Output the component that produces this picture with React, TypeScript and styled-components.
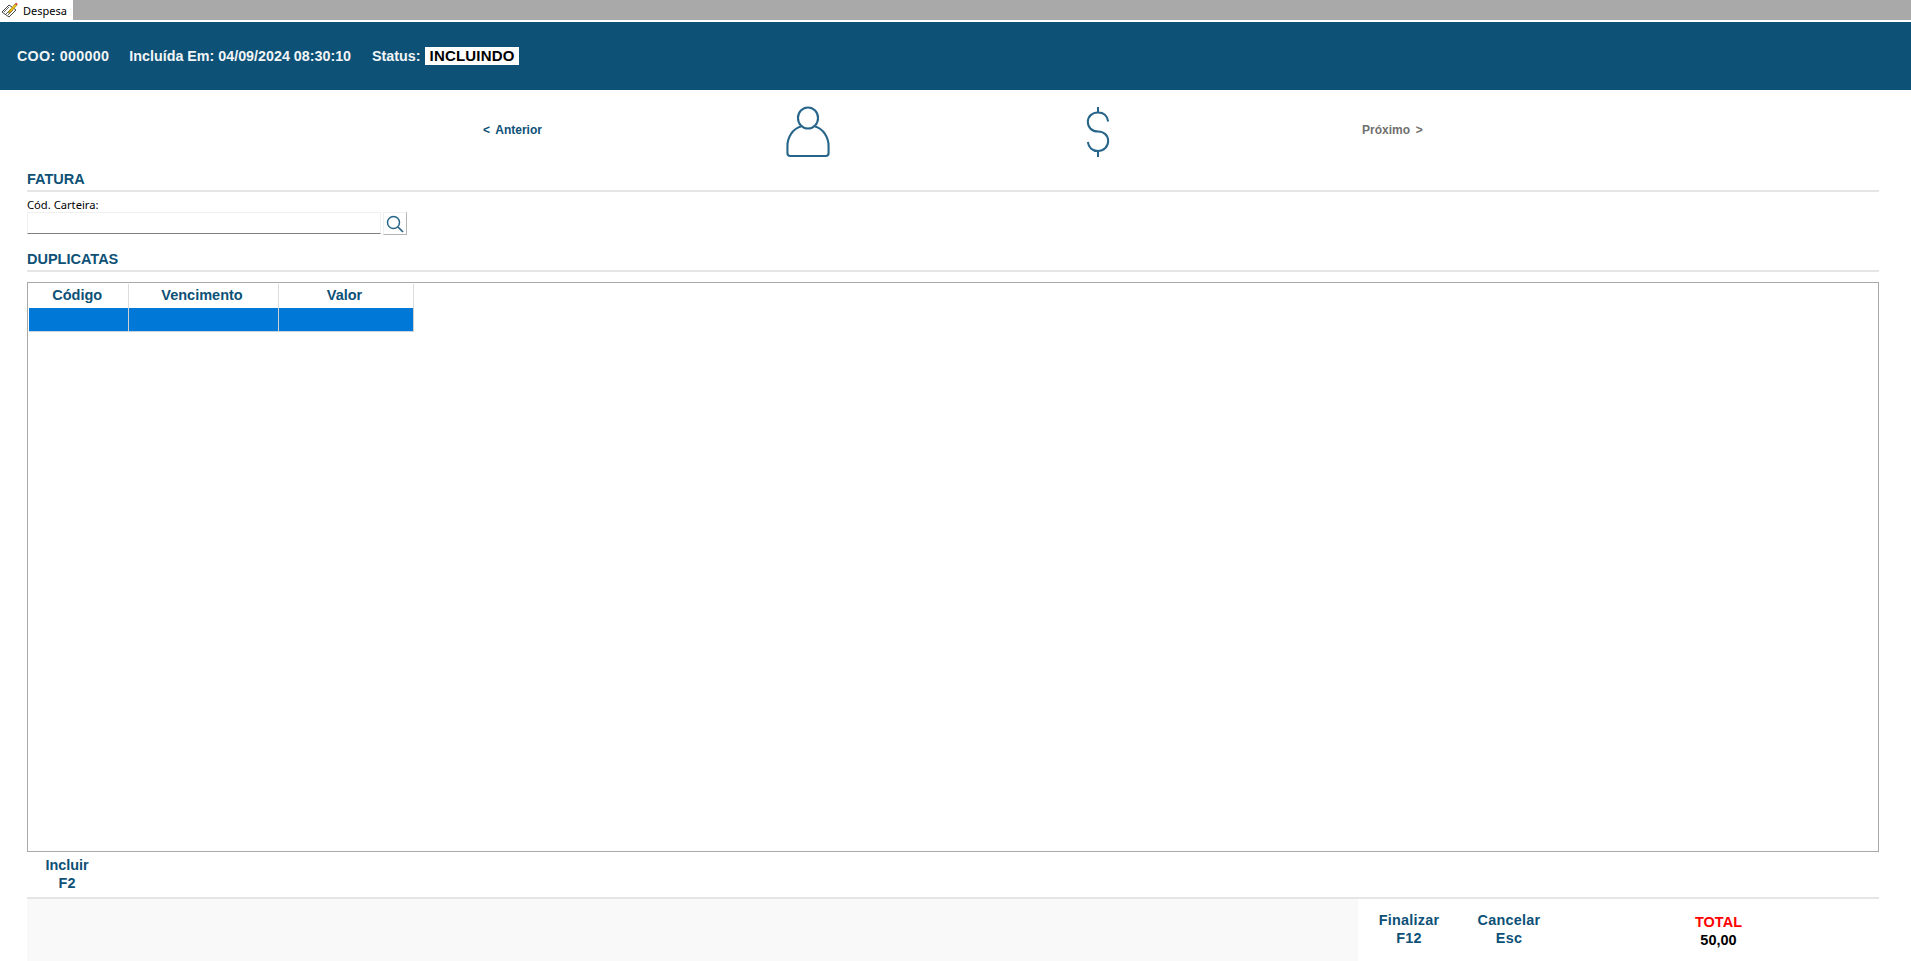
import React from 'react';
import styled, { createGlobalStyle } from 'styled-components';

const GlobalStyle = createGlobalStyle`
  html, body {
    margin: 0;
    padding: 0;
    background: #fff;
    overflow: hidden;
  }
  * {
    box-sizing: border-box;
  }
`;

const Page = styled.div`
  width: 1911px;
  height: 961px;
  display: flex;
  flex-direction: column;
  font-family: 'Liberation Sans', Arial, sans-serif;
  color: #0d5176;
`;

const TabBar = styled.div`
  height: 20px;
  background: #a9a9a9;
  display: flex;
  flex-shrink: 0;
`;

const Tab = styled.div`
  width: 73px;
  height: 20px;
  background: #fff;
  display: flex;
  align-items: center;
  padding-left: 1px;
  gap: 5px;
  font-family: 'Noto Sans', 'Open Sans', sans-serif;
  font-size: 11px;
  color: #000;
`;

const Header = styled.header`
  margin-top: 2px;
  height: 68px;
  background: #0d5176;
  display: flex;
  align-items: center;
  padding-left: 17px;
  color: #f2f5f7;
  font-size: 14.3px;
  font-weight: 700;
  flex-shrink: 0;
`;

const HeaderItem = styled.span<{ $spread?: boolean }>`
  margin-right: 20px;
  white-space: pre;
  letter-spacing: ${({ $spread }) => ($spread ? '0.3px' : '0')};
`;

const StatusLabel = styled.span`
  margin-left: 1px;
  margin-right: 4px;
`;

const StatusBadge = styled.span`
  background: #fff;
  color: #000;
  font-size: 15px;
  line-height: 18px;
  padding: 0 4px 0 5px;
  letter-spacing: 0.2px;
`;

const Steps = styled.nav`
  height: 78px;
  padding-left: 483px;
  display: grid;
  grid-template-columns: 303px 300px 276px auto;
  align-items: center;
  flex-shrink: 0;
`;

const StepLink = styled.span<{ $muted?: boolean }>`
  padding-top: 2px;
  font-size: 12px;
  font-weight: 700;
  white-space: pre;
  word-spacing: -0.5px;
  color: ${({ $muted }) => ($muted ? '#6f6f6f' : '#0d5176')};
`;

const StepIcon = styled.div`
  margin-top: 6px;

  svg {
    display: block;
  }
`;

const Content = styled.main`
  flex: 1;
  display: flex;
  flex-direction: column;
  padding: 0 32px 0 27px;
  min-height: 0;
`;

const SectionTitle = styled.h2`
  margin: 0;
  height: 24px;
  padding-top: 1px;
  font-size: 14.5px;
  line-height: 20px;
  font-weight: 700;
  color: #0d5176;
  border-bottom: 2px solid #e5e5e5;
  flex-shrink: 0;
`;

const FieldLabel = styled.label`
  display: block;
  height: 16px;
  margin-top: 5px;
  margin-bottom: -1px;
  font-family: 'Noto Sans', 'Open Sans', sans-serif;
  font-size: 11.2px;
  line-height: 16px;
  color: #000;
`;

const FieldRow = styled.div`
  display: flex;
  gap: 2px;
  height: 23px;
  margin-bottom: 13px;
  flex-shrink: 0;
`;

const TextField = styled.input`
  width: 354px;
  height: 22px;
  border: 1px solid #efefef;
  border-bottom: 1px solid #808080;
  background: #fff;
  outline: none;
  padding: 0 3px;
`;

const SearchButton = styled.button`
  width: 24px;
  height: 23px;
  padding: 0;
  background: #fff;
  border: 1px solid #f0f0f0;
  border-right-color: #b4b4b4;
  border-bottom-color: #b4b4b4;
  display: flex;
  align-items: center;
  justify-content: center;
`;

const GridFrame = styled.div`
  flex: 1;
  min-height: 0;
  margin-top: 10px;
  border: 1px solid #a9a9a9;
  padding: 1px 0 0 1px;
  background: #fff;
`;

const DataTable = styled.table`
  border-collapse: collapse;
  table-layout: fixed;
  width: 384px;
`;

const HeadCell = styled.th<{ $width: number }>`
  width: ${({ $width }) => $width}px;
  height: 24px;
  padding: 0 2px 2px 0;
  font-size: 14.5px;
  font-weight: 700;
  text-align: center;
  color: #0d5176;
  border-right: 1px solid #dcdcdc;
`;

const SelectedCell = styled.td`
  height: 23px;
  padding: 0;
  background: #0078d7;
  border-right: 1px solid #d0d0d0;
  border-bottom: 1px solid #c8d4de;
`;

const ActionRow = styled.div`
  height: 45px;
  flex-shrink: 0;
  display: flex;
`;

const ActionButton = styled.div<{ $width: number }>`
  width: ${({ $width }) => $width}px;
  text-align: center;
  font-size: 14.4px;
  font-weight: 700;
  line-height: 18px;
  color: #0d5176;
  padding-top: 4px;
`;

const Footer = styled.footer`
  margin-left: 27px;
  margin-right: 32px;
  height: 64px;
  flex-shrink: 0;
  display: flex;
  border-top: 2px solid #e5e5e5;
`;

const FooterSpacer = styled.div`
  width: 1331px;
  background: #f9f9f9;
`;

const FooterActions = styled.div`
  display: flex;
  padding-top: 12px;
`;

const FooterButton = styled(ActionButton)`
  padding-top: 0;
  letter-spacing: 0.25px;
`;

const TotalBlock = styled.div`
  width: 95px;
  margin-left: 113px;
  text-align: center;
  padding-top: 14px;
  font-size: 14.5px;
  font-weight: 700;
  line-height: 18px;
`;

const TotalLabel = styled.div`
  color: #ff0000;
`;

const TotalValue = styled.div`
  color: #000;
`;

const NotepadIcon = () => (
  <svg width="17" height="17" viewBox="0 0 17 17" fill="none">
    <path d="M1 10 L8 3 L15 8 L8 15 Z" fill="#fff" stroke="#444" strokeWidth="1" />
    <path d="M3 10 L8 5 M5 12 L10 7 M7 13 L12 8" stroke="#666" strokeWidth="1" />
    <path d="M8 9 L14 2 L16 3 L10 10 L7.5 11 Z" fill="#f0c419" stroke="#8a6d00" strokeWidth="0.6" />
    <path d="M14 2 L15 0.8 L16.6 2 L16 3 Z" fill="#d8232a" />
  </svg>
);

const PersonIcon = () => (
  <svg width="44" height="52" viewBox="0 0 46 52" preserveAspectRatio="none" fill="none" stroke="#27658a" strokeWidth="2.2">
    <circle cx="23" cy="12" r="10.5" />
    <path d="M15.5 20.5 C7 23 1.5 31 1.5 40 V47 C1.5 49.2 2.6 50 4.5 50 H41.5 C43.4 50 44.5 49.2 44.5 47 V40 C44.5 31 39 23 30.5 20.5" />
  </svg>
);

const DollarIcon = () => (
  <svg width="24" height="52" viewBox="0 0 26 52" preserveAspectRatio="none" fill="none" stroke="#27658a" strokeWidth="2.2">
    <path d="M13 1 V6.5 M13 45 V51" />
    <path d="M24 15.5 C23 9.5 18.5 6.5 13 6.5 C6.5 6.5 2 10.5 2 16 C2 21.5 6.5 25.5 13 25.5 C19.5 25.5 24 29.5 24 35 C24 40.5 19.5 45 13 45 C7 45 2.8 41.5 2 36" />
  </svg>
);

const SearchIcon = () => (
  <svg width="18" height="18" viewBox="0 0 18 18" fill="none" stroke="#27658a">
    <circle cx="7.5" cy="7.5" r="6" strokeWidth="1.5" />
    <path d="M12 12 L17 17" strokeWidth="1.7" />
  </svg>
);

const App: React.FC = () => (
  <>
    <GlobalStyle />
    <Page>
      <TabBar>
        <Tab>
          <NotepadIcon />
          Despesa
        </Tab>
      </TabBar>
      <Header>
        <HeaderItem $spread>COO: 000000</HeaderItem>
        <HeaderItem>Incluída Em: 04/09/2024 08:30:10</HeaderItem>
        <StatusLabel>Status:</StatusLabel>
        <StatusBadge>INCLUINDO</StatusBadge>
      </Header>
      <Steps>
        <StepLink>{'<  Anterior'}</StepLink>
        <StepIcon>
          <PersonIcon />
        </StepIcon>
        <StepIcon>
          <DollarIcon />
        </StepIcon>
        <StepLink $muted>{'Próximo  >'}</StepLink>
      </Steps>
      <Content>
        <SectionTitle>FATURA</SectionTitle>
        <FieldLabel>Cód. Carteira:</FieldLabel>
        <FieldRow>
          <TextField />
          <SearchButton>
            <SearchIcon />
          </SearchButton>
        </FieldRow>
        <SectionTitle>DUPLICATAS</SectionTitle>
        <GridFrame>
          <DataTable>
            <thead>
              <tr>
                <HeadCell $width={99}>Código</HeadCell>
                <HeadCell $width={150}>Vencimento</HeadCell>
                <HeadCell $width={135}>Valor</HeadCell>
              </tr>
            </thead>
            <tbody>
              <tr>
                <SelectedCell />
                <SelectedCell />
                <SelectedCell />
              </tr>
            </tbody>
          </DataTable>
        </GridFrame>
        <ActionRow>
          <ActionButton $width={80}>
            Incluir
            <br />
            F2
          </ActionButton>
        </ActionRow>
      </Content>
      <Footer>
        <FooterSpacer />
        <FooterActions>
          <FooterButton $width={102}>
            Finalizar
            <br />
            F12
          </FooterButton>
          <FooterButton $width={98}>
            Cancelar
            <br />
            Esc
          </FooterButton>
        </FooterActions>
        <TotalBlock>
          <TotalLabel>TOTAL</TotalLabel>
          <TotalValue>50,00</TotalValue>
        </TotalBlock>
      </Footer>
    </Page>
  </>
);

export default App;
